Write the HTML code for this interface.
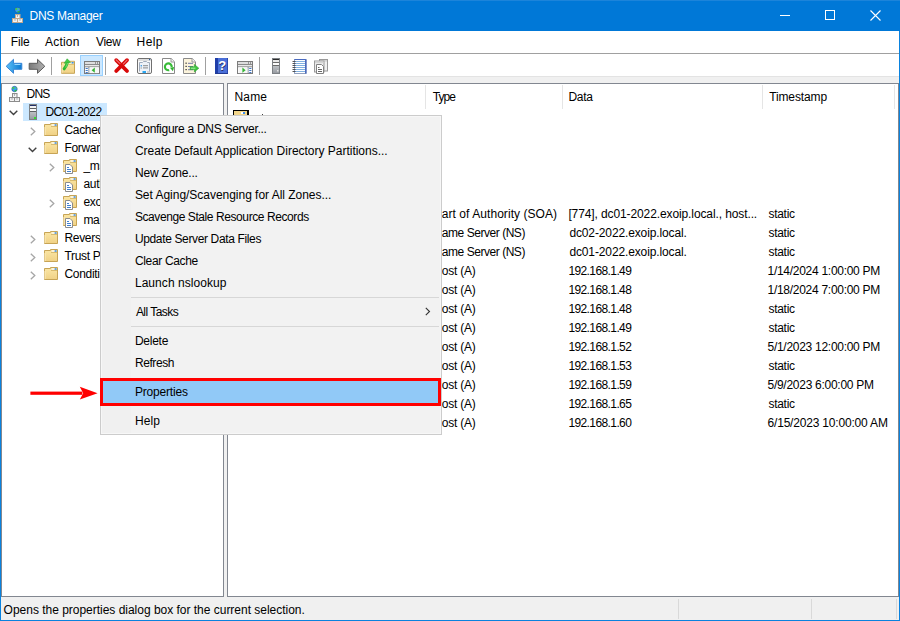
<!DOCTYPE html><html><head><meta charset="utf-8"><style>
*{margin:0;padding:0;box-sizing:border-box}
html,body{width:900px;height:621px;overflow:hidden;background:#fff}
body{position:relative;font-family:"Liberation Sans",sans-serif;font-size:12px;color:#000}
.a{position:absolute}
svg.a{overflow:visible}
.t{position:absolute;white-space:nowrap;line-height:14px}
.sep{position:absolute;top:57px;width:1px;height:18px;background:#a0a0a0}
.hsep{position:absolute;top:85px;width:1px;height:24px;background:#e5e5e5}
.msep{position:absolute;left:131px;width:308px;height:1px;background:#d7d7d7}
</style></head><body>
<svg width="0" height="0" style="position:absolute">
<defs>
<linearGradient id="gFold" x1="0" y1="0" x2="0" y2="1"><stop offset="0" stop-color="#fbe7a6"/><stop offset="1" stop-color="#f0d185"/></linearGradient>
<linearGradient id="gSrv" x1="0" y1="0" x2="0" y2="1"><stop offset="0" stop-color="#c8c8c8"/><stop offset="1" stop-color="#8a8a8a"/></linearGradient>
<linearGradient id="gBlue" x1="0" y1="0" x2="1" y2="0"><stop offset="0" stop-color="#5cc0f8"/><stop offset="1" stop-color="#0a78d0"/></linearGradient>
<linearGradient id="gSrv2" x1="0" y1="0" x2="0" y2="1"><stop offset="0" stop-color="#bcc0c4"/><stop offset="1" stop-color="#989ca2"/></linearGradient>
<linearGradient id="gGray" x1="0" y1="0" x2="1" y2="0"><stop offset="0" stop-color="#7a7a7a"/><stop offset="1" stop-color="#b0b0b0"/></linearGradient>
</defs></svg>
<div class="a" style="left:0px;top:0px;width:900px;height:31px;background:#0078d7;"></div>
<div class="a" style="left:0px;top:0px;width:900px;height:1px;background:#1c84da;"></div>
<div class="a" style="left:1px;top:31px;width:898px;height:22px;background:#fff;"></div>
<div class="a" style="left:1px;top:53px;width:898px;height:1px;background:#a0a0a0;"></div>
<div class="a" style="left:1px;top:54px;width:898px;height:22px;background:#fff;"></div>
<div class="a" style="left:1px;top:76px;width:898px;height:1px;background:#e3e3e3;"></div>
<div class="a" style="left:1px;top:77px;width:898px;height:520px;background:#f0f0f0;"></div>
<div class="a" style="left:1px;top:83px;width:223px;height:514px;background:#fff;border:1px solid #828790"></div>
<div class="a" style="left:227px;top:83px;width:672px;height:514px;background:#fff;border:1px solid #828790"></div>
<div class="a" style="left:1px;top:597px;width:898px;height:23px;background:#f0f0f0;"></div>
<div class="a" style="left:0px;top:31px;width:1px;height:590px;background:#0a82de;"></div>
<div class="a" style="left:899px;top:31px;width:1px;height:590px;background:#0a82de;"></div>
<div class="a" style="left:0px;top:620px;width:900px;height:1px;background:#0a82de;"></div>
<svg class="a" style="left:12px;top:7px" width="11" height="16" viewBox="0 0 11 16"><g style="--bs:#c0a890"><g>
  <circle cx="5.5" cy="3" r="2.7" fill="#3aa0f0" stroke="#1c4a9a" stroke-width="0.6"/>
  <path d="M3 1.6Q4.2 0.4 5.4 1.2Q5.8 2.6 4.6 3.2Q3.4 3.2 3 1.6Z" fill="#48d048"/>
  <path d="M5.2 4.4Q6.6 3.6 7.8 4.2Q7.4 5.6 5.8 5.8Z" fill="#30c030"/>
  <path d="M6.4 1Q7.8 1.2 8.2 2.4Q7.4 2.8 6.6 2Z" fill="#60d860"/>
  <rect x="3.5" y="7.5" width="4.5" height="4" fill="#ececec" style="stroke:var(--bs,#8c8c8c)"/>
  <rect x="0.5" y="11.5" width="5" height="4" fill="#ececec" style="stroke:var(--bs,#8c8c8c)"/>
  <rect x="5.5" y="11.5" width="5" height="4" fill="#ececec" style="stroke:var(--bs,#8c8c8c)"/>
  <rect x="4.5" y="9.5" width="2.5" height="1" fill="#fff"/>
  <rect x="1.5" y="13.5" width="3" height="1" fill="#fff"/>
  <rect x="6.5" y="13.5" width="3" height="1" fill="#fff"/>
  <rect x="5" y="8.5" width="1" height="1" fill="#707070"/>
  <rect x="2.5" y="12.5" width="1" height="1" fill="#707070"/>
  <rect x="7.5" y="12.5" width="1" height="1" fill="#707070"/>
</g></g></svg>
<div class="t" style="left:29.60px;top:9px;letter-spacing:-0.290px;color:#fff">DNS Manager</div>
<div class="a" style="left:780px;top:15px;width:10px;height:1px;background:#fff;"></div>
<div class="a" style="left:825px;top:10px;width:10px;height:10px;background:transparent;border:1px solid #fff"></div>
<svg class="a" style="left:870px;top:10px" width="11" height="11" viewBox="0 0 11 11"><path d="M0.5 0.5L10.5 10.5M10.5 0.5L0.5 10.5" stroke="#fff" stroke-width="1.1"/></svg>
<div class="t" style="left:10.80px;top:35px;letter-spacing:-0.133px;">File</div>
<div class="t" style="left:45.00px;top:35px;letter-spacing:0.200px;">Action</div>
<div class="t" style="left:96.00px;top:35px;letter-spacing:-0.333px;">View</div>
<div class="t" style="left:136.60px;top:35px;letter-spacing:0.400px;">Help</div>
<div class="sep" style="left:51px"></div>
<div class="sep" style="left:105px"></div>
<div class="sep" style="left:205px"></div>
<div class="sep" style="left:259px"></div>
<svg class="a" style="left:5px;top:58px" width="18" height="17" viewBox="0 0 18 17"><path d="M1.2 8.3L8.5 1.3V5.3H16.8V11.3H8.5V15.3Z" fill="url(#gBlue)" stroke="#3a86d6" stroke-linejoin="round"/><path d="M9.5 6.5H15.5" stroke="#9ad8ff" stroke-width="1"/></svg>
<svg class="a" style="left:28px;top:58px" width="18" height="17" viewBox="0 0 18 17"><path d="M16.8 8.3L9.5 1.3V5.3H1.2V11.3H9.5V15.3Z" fill="url(#gGray)" stroke="#5c5c5c" stroke-linejoin="round"/></svg>
<svg class="a" style="left:61px;top:58px" width="16" height="17" viewBox="0 0 16 17"><g transform="translate(0,2.8)"><g>
  <path d="M0.5 1.5H6.5V0.5H13.5V12.5H0.5Z" fill="url(#gFold)" stroke="#c7a455"/>
  <path d="M7 3.5H13" stroke="#d9bb6e" stroke-width="1"/>
  <rect x="7" y="1" width="6" height="2" fill="#f6e6b4"/>
  <rect x="8" y="1.5" width="3" height="1" fill="#ffffff"/>
  <rect x="10.5" y="1.3" width="2.2" height="1.4" rx="0.5" fill="#3d8ee8"/>
  <path d="M1 4V12" stroke="#fbecc0" stroke-width="1"/>
</g></g><path d="M3.2 10.8C4.6 9.2 5.8 7.6 6.2 4.6" fill="none" stroke="#2fb82f" stroke-width="3" stroke-linecap="round"/><path d="M3.2 5.2L6.2 0.8L9.6 4.4Z" fill="#44cc44" stroke="#2fa82f" stroke-width="0.6" stroke-linejoin="round"/><path d="M4.4 9.4C5.4 8.2 6 7 6.4 5" fill="none" stroke="#8ef08e" stroke-width="0.8"/></svg>
<div class="a" style="left:80px;top:55px;width:23px;height:21px;background:#cce8ff;border:1px solid #99d1ff"></div>
<svg class="a" style="left:84px;top:61px" width="16" height="13" viewBox="0 0 16 13"><rect x="0.5" y="0.5" width="15" height="12" fill="#fff" stroke="#7c7c7c"/><rect x="1" y="1" width="14" height="2" fill="#dedede"/><rect x="11" y="1.5" width="1" height="1" fill="#505050"/><rect x="13" y="1.5" width="1" height="1" fill="#505050"/><path d="M1 3.5H15" stroke="#8a8a8a"/><rect x="1" y="4" width="14" height="1.6" fill="#e8e8e8"/><path d="M1 5.8H15" stroke="#8a8a8a"/><path d="M5 6V12" stroke="#6c7a88"/><rect x="1.6" y="7" width="2.2" height="1" fill="#3f78c8"/><rect x="1.6" y="9" width="2.2" height="1" fill="#3f78c8"/><rect x="1.6" y="11" width="2.2" height="1" fill="#3f78c8"/><rect x="5.5" y="6.3" width="9" height="5.8" fill="#f6f6f6"/><path d="M7.6 9.2L10.8 6.6V11.8Z" fill="#35b535"/></svg>
<svg class="a" style="left:113px;top:57px" width="18" height="18" viewBox="0 0 18 18"><path d="M3.2 3.2L14 14M14 3.2L3.2 14" stroke="#d80808" stroke-width="3.8" stroke-linecap="round"/><path d="M3.2 3L7 6.6M14 3.2L10.4 6.8" stroke="#f06a6a" stroke-width="1.2" stroke-linecap="round"/></svg>
<svg class="a" style="left:137px;top:58px" width="16" height="16" viewBox="0 0 16 16"><rect x="0.5" y="0.5" width="14" height="15" rx="1.5" fill="#fafafa" stroke="#707070"/><rect x="1.2" y="1.2" width="12.6" height="1.6" fill="#d8d8d8"/><rect x="12" y="1" width="1.2" height="1.2" fill="#3060a0"/><path d="M2.5 13.5V4.5H5.5L6.5 3.5H9.5L10.5 4.5H12.5V13.5" fill="#eef2f8" stroke="#a0abbb"/><rect x="3.6" y="7.2" width="1.4" height="1.2" fill="#2a90e0"/><rect x="6" y="7.2" width="5" height="1" fill="#8a8a8a"/><rect x="3.6" y="9.4" width="1.2" height="1.2" fill="#9a9a9a"/><rect x="6" y="9.4" width="5" height="1" fill="#8a8a8a"/><rect x="5.5" y="13" width="3.5" height="2" fill="#29a5ef"/><rect x="10" y="13.5" width="3" height="1" fill="#b0b0b0"/></svg>
<svg class="a" style="left:162px;top:58px" width="14" height="16" viewBox="0 0 14 16"><path d="M0.5 0.5H9.2L12.5 3.8V15.5H0.5Z" fill="#fff" stroke="#8a8a8a"/><path d="M9 0.5V4H12.5" fill="#f0f0f0" stroke="#9a9a9a"/><path d="M7.2 12.1A3.4 3.4 0 1 1 9.7 9.1" fill="none" stroke="#38bb38" stroke-width="2.2"/><path d="M7.9 9.8L12.2 9.0L10.9 13.3Z" fill="#30b030"/></svg>
<svg class="a" style="left:183px;top:58px" width="17" height="16" viewBox="0 0 17 16"><path d="M0.5 0.5H9.2L12.5 3.8V15.5H0.5Z" fill="#fcf4dc" stroke="#8a8a8a"/><path d="M9 0.5V4H12.5" fill="#f4f4f4" stroke="#9a9a9a"/><rect x="2.5" y="4.6" width="1.2" height="1.2" fill="#222"/><rect x="2.5" y="7.8" width="1.2" height="1.2" fill="#222"/><rect x="2.5" y="11" width="1.2" height="1.2" fill="#222"/><rect x="5" y="4.8" width="5" height="1" fill="#7078a8"/><rect x="5" y="8" width="5" height="1" fill="#7078a8"/><rect x="5" y="11.2" width="5" height="1" fill="#7078a8"/><g transform="translate(0,1)"><path d="M7.2 7.8H11.4V5.4L15.8 9.2L11.4 13V10.6H7.2Z" fill="#3cc43c" stroke="#2aa02a" stroke-width="0.6" stroke-linejoin="round"/><path d="M8 9.2H12.4" stroke="#b8f8b8" stroke-width="0.9"/></g></svg>
<svg class="a" style="left:215px;top:58px" width="13" height="16" viewBox="0 0 13 16"><rect x="0" y="0" width="13" height="16" fill="#4a6fd8"/><rect x="0" y="0" width="3" height="16" fill="#1f3ea8"/><rect x="12" y="0" width="1" height="16" fill="#2a48b0"/><rect x="0" y="15" width="13" height="1" fill="#223a92"/><text x="7.8" y="13" font-family="Liberation Sans" font-size="13" font-weight="bold" fill="#28306a" text-anchor="middle">?</text><text x="7.2" y="12.4" font-family="Liberation Sans" font-size="13" font-weight="bold" fill="#fff" text-anchor="middle">?</text></svg>
<svg class="a" style="left:237px;top:61px" width="16" height="13" viewBox="0 0 16 13"><rect x="0.5" y="0.5" width="15" height="12" fill="#fff" stroke="#7c7c7c"/><rect x="1" y="1" width="14" height="2" fill="#dedede"/><rect x="11" y="1.5" width="1" height="1" fill="#505050"/><rect x="13" y="1.5" width="1" height="1" fill="#505050"/><path d="M1 3.5H15" stroke="#8a8a8a"/><rect x="1" y="4" width="14" height="1.6" fill="#e8e8e8"/><path d="M1 5.8H15" stroke="#8a8a8a"/><path d="M11 6V12" stroke="#6c7a88"/><rect x="12.2" y="7" width="2.2" height="1" fill="#3f78c8"/><rect x="12.2" y="9" width="2.2" height="1" fill="#3f78c8"/><rect x="12.2" y="11" width="2.2" height="1" fill="#3f78c8"/><rect x="1.5" y="6.3" width="9" height="5.8" fill="#f6f6f6"/><path d="M5.4 6.6L8.6 9.2L5.4 11.8Z" fill="#35b535"/></svg>
<svg class="a" style="left:272px;top:58px" width="8" height="16" viewBox="0 0 8 16"><rect x="0" y="0" width="8" height="16" fill="#7c8084"/><rect x="1" y="1" width="6" height="1" fill="#2a2a2a"/><rect x="1" y="2" width="6" height="2" fill="#e8e8e8"/><rect x="1" y="4" width="6" height="1" fill="#6a6a6a"/><rect x="1" y="5" width="6" height="2" fill="#fbfbfb"/><rect x="1" y="7" width="6" height="1" fill="#6a6a6a"/><rect x="1" y="8" width="6" height="7" fill="url(#gSrv2)"/><rect x="5" y="12" width="1.5" height="1.5" fill="#e0e0e0"/></svg>
<svg class="a" style="left:292px;top:59px" width="15" height="15" viewBox="0 0 15 15"><rect x="2.5" y="0.5" width="11.5" height="14" fill="#fff" stroke="#90a0c0"/><path d="M13.8 0.5V14.5" stroke="#3f5fb8" stroke-width="1.4"/><path d="M2.5 0.5H13.8" stroke="#4a6ac0"/><path d="M3 2.5H13M3 4.5H13M3 6.5H13M3 8.5H13M3 10.5H13M3 12.5H13" stroke="#80b0e0"/><path d="M0.5 2.5H3.5M0.5 4.5H3.5M0.5 6.5H3.5M0.5 8.5H3.5M0.5 10.5H3.5M0.5 12.5H3.5" stroke="#444" stroke-width="0.9"/></svg>
<svg class="a" style="left:314px;top:59px" width="14" height="15" viewBox="0 0 14 15"><rect x="5.5" y="0.5" width="8" height="11.5" fill="#f0f0f0" stroke="#9a9a9a"/><rect x="6" y="1" width="7" height="1.6" fill="#d4d4d4"/><rect x="0.5" y="2" width="9.5" height="11" fill="#ececec" stroke="#9a9a9a"/><rect x="1" y="2.5" width="8.5" height="1.6" fill="#d4d4d4"/><path d="M2.5 5.5H7.5L9.5 7.5V14.5H2.5Z" fill="#fff" stroke="#808080"/><path d="M4 8.5H5.5M4 10.5H8M4 12.5H8" stroke="#555" stroke-width="0.9"/></svg>
<svg class="a" style="left:9px;top:86px" width="11" height="16" viewBox="0 0 11 16"><g>
  <circle cx="5.5" cy="3" r="2.7" fill="#3aa0f0" stroke="#1c4a9a" stroke-width="0.6"/>
  <path d="M3 1.6Q4.2 0.4 5.4 1.2Q5.8 2.6 4.6 3.2Q3.4 3.2 3 1.6Z" fill="#48d048"/>
  <path d="M5.2 4.4Q6.6 3.6 7.8 4.2Q7.4 5.6 5.8 5.8Z" fill="#30c030"/>
  <path d="M6.4 1Q7.8 1.2 8.2 2.4Q7.4 2.8 6.6 2Z" fill="#60d860"/>
  <rect x="3.5" y="7.5" width="4.5" height="4" fill="#ececec" style="stroke:var(--bs,#8c8c8c)"/>
  <rect x="0.5" y="11.5" width="5" height="4" fill="#ececec" style="stroke:var(--bs,#8c8c8c)"/>
  <rect x="5.5" y="11.5" width="5" height="4" fill="#ececec" style="stroke:var(--bs,#8c8c8c)"/>
  <rect x="4.5" y="9.5" width="2.5" height="1" fill="#fff"/>
  <rect x="1.5" y="13.5" width="3" height="1" fill="#fff"/>
  <rect x="6.5" y="13.5" width="3" height="1" fill="#fff"/>
  <rect x="5" y="8.5" width="1" height="1" fill="#707070"/>
  <rect x="2.5" y="12.5" width="1" height="1" fill="#707070"/>
  <rect x="7.5" y="12.5" width="1" height="1" fill="#707070"/>
</g></svg>
<div class="t" style="left:26.50px;top:87px;letter-spacing:-0.750px;">DNS</div>
<div class="a" style="left:23px;top:103px;width:84px;height:18px;background:#cce8ff;"></div>
<svg class="a" style="left:9px;top:110px" width="9" height="6" viewBox="0 0 9 6"><path d="M0.7 0.7L4.5 4.5L8.3 0.7" fill="none" stroke="#404040" stroke-width="1.4"/></svg>
<svg class="a" style="left:29px;top:104px" width="8" height="16" viewBox="0 0 8 16"><rect x="0" y="0" width="8" height="16" fill="#7c8084"/><rect x="1" y="1" width="6" height="1" fill="#22306a"/><rect x="1" y="2" width="6" height="2" fill="#f2f2f2"/><rect x="1" y="4" width="6" height="1" fill="#5c6064"/><rect x="1" y="5" width="6" height="2" fill="#fbfbfb"/><rect x="1" y="7" width="6" height="1" fill="#5c6064"/><rect x="1" y="8" width="6" height="7" fill="url(#gSrv2)"/><rect x="5" y="13" width="2" height="2" fill="#30dd30"/></svg>
<div class="t" style="left:45.40px;top:105px;letter-spacing:-0.587px;">DC01-2022</div>
<svg class="a" style="left:30px;top:127px" width="6" height="9" viewBox="0 0 6 9"><path d="M0.8 0.8L4.8 4.5L0.8 8.2" fill="none" stroke="#a6a6a6" stroke-width="1.3"/></svg>
<svg class="a" style="left:44px;top:123px" width="16" height="16" viewBox="0 0 16 16"><g>
  <path d="M0.5 1.5H6.5V0.5H13.5V12.5H0.5Z" fill="url(#gFold)" stroke="#c7a455"/>
  <path d="M7 3.5H13" stroke="#d9bb6e" stroke-width="1"/>
  <rect x="7" y="1" width="6" height="2" fill="#f6e6b4"/>
  <rect x="8" y="1.5" width="3" height="1" fill="#ffffff"/>
  <rect x="10.5" y="1.3" width="2.2" height="1.4" rx="0.5" fill="#3d8ee8"/>
  <path d="M1 4V12" stroke="#fbecc0" stroke-width="1"/>
</g></svg>
<div class="t" style="left:64.40px;top:123px;letter-spacing:-0.300px;">Cached</div>
<svg class="a" style="left:28px;top:147px" width="9" height="6" viewBox="0 0 9 6"><path d="M0.7 0.7L4.5 4.5L8.3 0.7" fill="none" stroke="#404040" stroke-width="1.4"/></svg>
<svg class="a" style="left:44px;top:141px" width="16" height="16" viewBox="0 0 16 16"><g>
  <path d="M0.5 1.5H6.5V0.5H13.5V12.5H0.5Z" fill="url(#gFold)" stroke="#c7a455"/>
  <path d="M7 3.5H13" stroke="#d9bb6e" stroke-width="1"/>
  <rect x="7" y="1" width="6" height="2" fill="#f6e6b4"/>
  <rect x="8" y="1.5" width="3" height="1" fill="#ffffff"/>
  <rect x="10.5" y="1.3" width="2.2" height="1.4" rx="0.5" fill="#3d8ee8"/>
  <path d="M1 4V12" stroke="#fbecc0" stroke-width="1"/>
</g></svg>
<div class="t" style="left:64.40px;top:141px;letter-spacing:-0.300px;">Forward</div>
<svg class="a" style="left:49px;top:163px" width="6" height="9" viewBox="0 0 6 9"><path d="M0.8 0.8L4.8 4.5L0.8 8.2" fill="none" stroke="#a6a6a6" stroke-width="1.3"/></svg>
<svg class="a" style="left:63px;top:159px" width="16" height="16" viewBox="0 0 16 16"><g>
  <path d="M0.5 1.5H6.5V0.5H13.5V12.5H0.5Z" fill="url(#gFold)" stroke="#c7a455"/>
  <path d="M7 3.5H13" stroke="#d9bb6e" stroke-width="1"/>
  <rect x="7" y="1" width="6" height="2" fill="#f6e6b4"/>
  <rect x="8" y="1.5" width="3" height="1" fill="#ffffff"/>
  <rect x="10.5" y="1.3" width="2.2" height="1.4" rx="0.5" fill="#3d8ee8"/>
  <path d="M1 4V12" stroke="#fbecc0" stroke-width="1"/>
  <path d="M2.5 5.5H7L9.5 8V14.5H2.5Z" fill="#fff" stroke="#8c8c8c"/>
  <rect x="4" y="8" width="2" height="1" fill="#3f7fd0"/>
  <rect x="4" y="10" width="4" height="1" fill="#3f7fd0"/>
  <rect x="4" y="12" width="4" height="1" fill="#3f7fd0"/>
</g></svg>
<div class="t" style="left:83.40px;top:159px;letter-spacing:-0.300px;">_msdcs</div>
<svg class="a" style="left:63px;top:177px" width="16" height="16" viewBox="0 0 16 16"><g>
  <path d="M0.5 1.5H6.5V0.5H13.5V12.5H0.5Z" fill="url(#gFold)" stroke="#c7a455"/>
  <path d="M7 3.5H13" stroke="#d9bb6e" stroke-width="1"/>
  <rect x="7" y="1" width="6" height="2" fill="#f6e6b4"/>
  <rect x="8" y="1.5" width="3" height="1" fill="#ffffff"/>
  <rect x="10.5" y="1.3" width="2.2" height="1.4" rx="0.5" fill="#3d8ee8"/>
  <path d="M1 4V12" stroke="#fbecc0" stroke-width="1"/>
  <path d="M2.5 5.5H7L9.5 8V14.5H2.5Z" fill="#fff" stroke="#8c8c8c"/>
  <rect x="4" y="8" width="2" height="1" fill="#3f7fd0"/>
  <rect x="4" y="10" width="4" height="1" fill="#3f7fd0"/>
  <rect x="4" y="12" width="4" height="1" fill="#3f7fd0"/>
</g></svg>
<div class="t" style="left:83.40px;top:177px;letter-spacing:-0.300px;">auth</div>
<svg class="a" style="left:49px;top:199px" width="6" height="9" viewBox="0 0 6 9"><path d="M0.8 0.8L4.8 4.5L0.8 8.2" fill="none" stroke="#a6a6a6" stroke-width="1.3"/></svg>
<svg class="a" style="left:63px;top:195px" width="16" height="16" viewBox="0 0 16 16"><g>
  <path d="M0.5 1.5H6.5V0.5H13.5V12.5H0.5Z" fill="url(#gFold)" stroke="#c7a455"/>
  <path d="M7 3.5H13" stroke="#d9bb6e" stroke-width="1"/>
  <rect x="7" y="1" width="6" height="2" fill="#f6e6b4"/>
  <rect x="8" y="1.5" width="3" height="1" fill="#ffffff"/>
  <rect x="10.5" y="1.3" width="2.2" height="1.4" rx="0.5" fill="#3d8ee8"/>
  <path d="M1 4V12" stroke="#fbecc0" stroke-width="1"/>
  <path d="M2.5 5.5H7L9.5 8V14.5H2.5Z" fill="#fff" stroke="#8c8c8c"/>
  <rect x="4" y="8" width="2" height="1" fill="#3f7fd0"/>
  <rect x="4" y="10" width="4" height="1" fill="#3f7fd0"/>
  <rect x="4" y="12" width="4" height="1" fill="#3f7fd0"/>
</g></svg>
<div class="t" style="left:83.40px;top:195px;letter-spacing:-0.300px;">exoip</div>
<svg class="a" style="left:63px;top:213px" width="16" height="16" viewBox="0 0 16 16"><g>
  <path d="M0.5 1.5H6.5V0.5H13.5V12.5H0.5Z" fill="url(#gFold)" stroke="#c7a455"/>
  <path d="M7 3.5H13" stroke="#d9bb6e" stroke-width="1"/>
  <rect x="7" y="1" width="6" height="2" fill="#f6e6b4"/>
  <rect x="8" y="1.5" width="3" height="1" fill="#ffffff"/>
  <rect x="10.5" y="1.3" width="2.2" height="1.4" rx="0.5" fill="#3d8ee8"/>
  <path d="M1 4V12" stroke="#fbecc0" stroke-width="1"/>
  <path d="M2.5 5.5H7L9.5 8V14.5H2.5Z" fill="#fff" stroke="#8c8c8c"/>
  <rect x="4" y="8" width="2" height="1" fill="#3f7fd0"/>
  <rect x="4" y="10" width="4" height="1" fill="#3f7fd0"/>
  <rect x="4" y="12" width="4" height="1" fill="#3f7fd0"/>
</g></svg>
<div class="t" style="left:83.40px;top:213px;letter-spacing:-0.300px;">mail</div>
<svg class="a" style="left:30px;top:235px" width="6" height="9" viewBox="0 0 6 9"><path d="M0.8 0.8L4.8 4.5L0.8 8.2" fill="none" stroke="#a6a6a6" stroke-width="1.3"/></svg>
<svg class="a" style="left:44px;top:231px" width="16" height="16" viewBox="0 0 16 16"><g>
  <path d="M0.5 1.5H6.5V0.5H13.5V12.5H0.5Z" fill="url(#gFold)" stroke="#c7a455"/>
  <path d="M7 3.5H13" stroke="#d9bb6e" stroke-width="1"/>
  <rect x="7" y="1" width="6" height="2" fill="#f6e6b4"/>
  <rect x="8" y="1.5" width="3" height="1" fill="#ffffff"/>
  <rect x="10.5" y="1.3" width="2.2" height="1.4" rx="0.5" fill="#3d8ee8"/>
  <path d="M1 4V12" stroke="#fbecc0" stroke-width="1"/>
</g></svg>
<div class="t" style="left:64.40px;top:231px;letter-spacing:-0.300px;">Reverse</div>
<svg class="a" style="left:30px;top:253px" width="6" height="9" viewBox="0 0 6 9"><path d="M0.8 0.8L4.8 4.5L0.8 8.2" fill="none" stroke="#a6a6a6" stroke-width="1.3"/></svg>
<svg class="a" style="left:44px;top:249px" width="16" height="16" viewBox="0 0 16 16"><g>
  <path d="M0.5 1.5H6.5V0.5H13.5V12.5H0.5Z" fill="url(#gFold)" stroke="#c7a455"/>
  <path d="M7 3.5H13" stroke="#d9bb6e" stroke-width="1"/>
  <rect x="7" y="1" width="6" height="2" fill="#f6e6b4"/>
  <rect x="8" y="1.5" width="3" height="1" fill="#ffffff"/>
  <rect x="10.5" y="1.3" width="2.2" height="1.4" rx="0.5" fill="#3d8ee8"/>
  <path d="M1 4V12" stroke="#fbecc0" stroke-width="1"/>
</g></svg>
<div class="t" style="left:64.40px;top:249px;letter-spacing:-0.300px;">Trust Points</div>
<svg class="a" style="left:30px;top:271px" width="6" height="9" viewBox="0 0 6 9"><path d="M0.8 0.8L4.8 4.5L0.8 8.2" fill="none" stroke="#a6a6a6" stroke-width="1.3"/></svg>
<svg class="a" style="left:44px;top:267px" width="16" height="16" viewBox="0 0 16 16"><g>
  <path d="M0.5 1.5H6.5V0.5H13.5V12.5H0.5Z" fill="url(#gFold)" stroke="#c7a455"/>
  <path d="M7 3.5H13" stroke="#d9bb6e" stroke-width="1"/>
  <rect x="7" y="1" width="6" height="2" fill="#f6e6b4"/>
  <rect x="8" y="1.5" width="3" height="1" fill="#ffffff"/>
  <rect x="10.5" y="1.3" width="2.2" height="1.4" rx="0.5" fill="#3d8ee8"/>
  <path d="M1 4V12" stroke="#fbecc0" stroke-width="1"/>
</g></svg>
<div class="t" style="left:64.40px;top:267px;letter-spacing:-0.300px;">Conditional</div>
<div class="t" style="left:234.60px;top:90px;letter-spacing:0.100px;">Name</div>
<div class="t" style="left:432.80px;top:90px;letter-spacing:-0.933px;">Type</div>
<div class="t" style="left:568.50px;top:90px;letter-spacing:-0.300px;">Data</div>
<div class="t" style="left:769.20px;top:90px;letter-spacing:-0.125px;">Timestamp</div>
<div class="hsep" style="left:425px"></div>
<div class="hsep" style="left:562px"></div>
<div class="hsep" style="left:762px"></div>
<div class="hsep" style="left:894px"></div>
<svg class="a" style="left:233px;top:110px" width="16" height="14" viewBox="0 0 16 14"><rect x="0" y="0" width="16" height="6" fill="#000"/><rect x="1" y="1" width="13" height="5" fill="#f2d58a"/><rect x="8" y="2" width="4" height="2" fill="#fff"/><rect x="10" y="2" width="2" height="2" fill="#3d8ee8"/></svg>
<div class="a" style="left:262px;top:114px;width:1px;height:1px;background:#404040;"></div>
<div class="t" style="left:441.80px;top:207px;letter-spacing:0.057px;">art of Authority (SOA)</div>
<div class="t" style="left:568.40px;top:207px;letter-spacing:-0.108px;">[774], dc01-2022.exoip.local., host...</div>
<div class="t" style="left:768.50px;top:207px;letter-spacing:-0.300px;">static</div>
<div class="t" style="left:441.80px;top:226px;letter-spacing:-0.457px;">ame Server (NS)</div>
<div class="t" style="left:569.40px;top:226px;letter-spacing:-0.124px;">dc02-2022.exoip.local.</div>
<div class="t" style="left:768.50px;top:226px;letter-spacing:-0.300px;">static</div>
<div class="t" style="left:441.80px;top:245px;letter-spacing:-0.457px;">ame Server (NS)</div>
<div class="t" style="left:569.40px;top:245px;letter-spacing:-0.124px;">dc01-2022.exoip.local.</div>
<div class="t" style="left:768.50px;top:245px;letter-spacing:-0.300px;">static</div>
<div class="t" style="left:441.80px;top:264px;letter-spacing:-0.217px;">ost (A)</div>
<div class="t" style="left:568.40px;top:264px;letter-spacing:-0.600px;">192.168.1.49</div>
<div class="t" style="left:767.50px;top:264px;letter-spacing:-0.279px;">1/14/2024 1:00:00 PM</div>
<div class="t" style="left:441.80px;top:283px;letter-spacing:-0.217px;">ost (A)</div>
<div class="t" style="left:568.40px;top:283px;letter-spacing:-0.600px;">192.168.1.48</div>
<div class="t" style="left:767.50px;top:283px;letter-spacing:-0.279px;">1/18/2024 7:00:00 PM</div>
<div class="t" style="left:441.80px;top:302px;letter-spacing:-0.217px;">ost (A)</div>
<div class="t" style="left:568.40px;top:302px;letter-spacing:-0.600px;">192.168.1.48</div>
<div class="t" style="left:768.50px;top:302px;letter-spacing:-0.300px;">static</div>
<div class="t" style="left:441.80px;top:321px;letter-spacing:-0.217px;">ost (A)</div>
<div class="t" style="left:568.40px;top:321px;letter-spacing:-0.600px;">192.168.1.49</div>
<div class="t" style="left:768.50px;top:321px;letter-spacing:-0.300px;">static</div>
<div class="t" style="left:441.80px;top:340px;letter-spacing:-0.217px;">ost (A)</div>
<div class="t" style="left:568.40px;top:340px;letter-spacing:-0.600px;">192.168.1.52</div>
<div class="t" style="left:767.50px;top:340px;letter-spacing:-0.279px;">5/1/2023 12:00:00 PM</div>
<div class="t" style="left:441.80px;top:359px;letter-spacing:-0.217px;">ost (A)</div>
<div class="t" style="left:568.40px;top:359px;letter-spacing:-0.600px;">192.168.1.53</div>
<div class="t" style="left:768.50px;top:359px;letter-spacing:-0.300px;">static</div>
<div class="t" style="left:441.80px;top:378px;letter-spacing:-0.217px;">ost (A)</div>
<div class="t" style="left:568.40px;top:378px;letter-spacing:-0.600px;">192.168.1.59</div>
<div class="t" style="left:767.50px;top:378px;letter-spacing:-0.272px;">5/9/2023 6:00:00 PM</div>
<div class="t" style="left:441.80px;top:397px;letter-spacing:-0.217px;">ost (A)</div>
<div class="t" style="left:568.40px;top:397px;letter-spacing:-0.600px;">192.168.1.65</div>
<div class="t" style="left:768.50px;top:397px;letter-spacing:-0.300px;">static</div>
<div class="t" style="left:441.80px;top:416px;letter-spacing:-0.217px;">ost (A)</div>
<div class="t" style="left:568.40px;top:416px;letter-spacing:-0.600px;">192.168.1.60</div>
<div class="t" style="left:767.50px;top:416px;letter-spacing:-0.185px;">6/15/2023 10:00:00 AM</div>
<div class="a" style="left:678px;top:599px;width:1px;height:20px;background:#d9d9d9;"></div>
<div class="a" style="left:811px;top:599px;width:1px;height:20px;background:#d9d9d9;"></div>
<div class="a" style="left:896px;top:599px;width:1px;height:20px;background:#d9d9d9;"></div>
<div class="t" style="left:3.60px;top:603px;letter-spacing:-0.016px;">Opens the properties dialog box for the current selection.</div>
<div class="a" style="left:100px;top:115px;width:342px;height:320px;background:#f0f0f0;border:1px solid #cccccc;box-shadow:inset 0 0 0 1px #f7f7f7"></div>
<div class="a" style="left:131px;top:117px;width:309px;height:316px;background:#f2f2f2;"></div>
<div class="t" style="left:134.90px;top:122px;letter-spacing:-0.279px;">Configure a DNS Server...</div>
<div class="t" style="left:134.90px;top:144px;letter-spacing:-0.014px;">Create Default Application Directory Partitions...</div>
<div class="t" style="left:134.90px;top:166px;letter-spacing:-0.170px;">New Zone...</div>
<div class="t" style="left:134.90px;top:188px;letter-spacing:-0.025px;">Set Aging/Scavenging for All Zones...</div>
<div class="t" style="left:134.90px;top:210px;letter-spacing:-0.417px;">Scavenge Stale Resource Records</div>
<div class="t" style="left:134.90px;top:232px;letter-spacing:-0.357px;">Update Server Data Files</div>
<div class="t" style="left:134.90px;top:254px;letter-spacing:-0.330px;">Clear Cache</div>
<div class="t" style="left:134.90px;top:276px;letter-spacing:0.064px;">Launch nslookup</div>
<div class="t" style="left:135.90px;top:305px;letter-spacing:-0.538px;">All Tasks</div>
<div class="t" style="left:134.90px;top:334px;letter-spacing:-0.240px;">Delete</div>
<div class="t" style="left:134.90px;top:356px;letter-spacing:-0.417px;">Refresh</div>
<div class="t" style="left:134.90px;top:414px;letter-spacing:0.133px;">Help</div>
<div class="msep" style="top:297px"></div>
<div class="msep" style="top:326px"></div>
<svg class="a" style="left:425px;top:307px" width="6" height="9" viewBox="0 0 6 9"><path d="M0.8 0.8L4.5 4.5L0.8 8.2" fill="none" stroke="#333" stroke-width="1.1"/></svg>
<div class="a" style="left:103px;top:381px;width:335px;height:22px;background:#91c9f7;"></div>
<div class="a" style="left:100px;top:378px;width:341px;height:28px;background:transparent;border:3px solid #ff0000"></div>
<div class="t" style="left:134.90px;top:385px;letter-spacing:-0.189px;">Properties</div>
<svg class="a" style="left:0px;top:0px" width="900" height="621" viewBox="0 0 900 621"><rect x="30.4" y="391.6" width="52" height="3.2" fill="#ff0000"/><path d="M79.8 386.8L97.6 393.2L79.8 399.6L83.2 393.2Z" fill="#ff0000"/></svg>
</body></html>
